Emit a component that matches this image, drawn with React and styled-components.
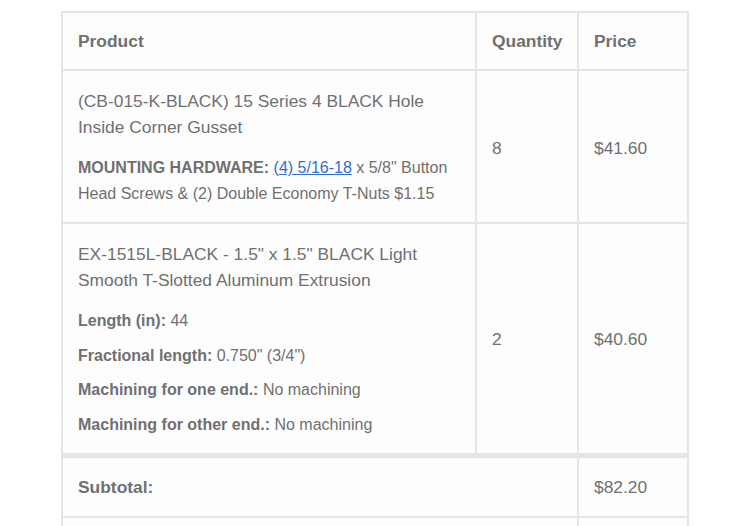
import React from "react";
import styled, { createGlobalStyle } from "styled-components";

const Global = createGlobalStyle`
  html, body { margin: 0; padding: 0; background: #ffffff; }
  body { font-family: "Liberation Sans", Arial, Helvetica, sans-serif; }
`;

const Page = styled.div`
  padding: 11px 0 0 61px;
  height: 526px;
  box-sizing: border-box;
  overflow: hidden;
`;

const Table = styled.table`
  width: 628px;
  table-layout: fixed;
  border-collapse: separate;
  border-spacing: 0;
  border: 1px solid #e5e5e5;
  background: #fdfdfd;
  color: #707070;
  font-size: 17.4px;
`;

const Col = styled.col`
  width: ${(p) => p.$w}px;
`;

const HeadCell = styled.th`
  border: 1px solid #e5e5e5;
  padding: 15px 15px;
  line-height: 26px;
  text-align: left;
  font-weight: bold;
  vertical-align: middle;
`;

const Cell = styled.td`
  border: 1px solid #e5e5e5;
  padding: 17px 15px 15px;
  line-height: 26px;
  text-align: left;
  vertical-align: middle;
  word-wrap: break-word;
`;

const FootCell = styled(Cell)`
  padding: 16px 15px;
  border-top-width: ${(p) => (p.$first ? "4px" : "1px")};
  font-weight: ${(p) => (p.$label ? "bold" : "normal")};
`;

const Title = styled.div`
  line-height: 26px;
`;

const MetaList = styled.ul`
  list-style: none;
  margin: 15px 0 0;
  padding: 0;
  font-size: 16px;
`;

const MetaItem = styled.li`
  line-height: 26px;
  margin: 0;
  & + & {
    margin-top: 8.5px;
  }
`;

const Label = styled.strong`
  font-weight: bold;
`;

const Link = styled.a`
  color: #2f6fd1;
  text-decoration: underline;
`;

const items = [
  {
    title: "(CB-015-K-BLACK) 15 Series 4 BLACK Hole Inside Corner Gusset",
    meta: [
      {
        label: "MOUNTING HARDWARE:",
        value: (
          <>
            <Link href="#">(4) 5/16-18</Link> x 5/8" Button Head Screws &amp; (2)
            Double Economy T-Nuts $1.15
          </>
        ),
      },
    ],
    qty: "8",
    price: "$41.60",
  },
  {
    title: 'EX-1515L-BLACK - 1.5" x 1.5" BLACK Light Smooth T-Slotted Aluminum Extrusion',
    meta: [
      { label: "Length (in):", value: "44" },
      { label: "Fractional length:", value: '0.750" (3/4")' },
      { label: "Machining for one end.:", value: "No machining" },
      { label: "Machining for other end.:", value: "No machining" },
    ],
    qty: "2",
    price: "$40.60",
  },
];

export default function App() {
  return (
    <Page>
      <Global />
      <Table>
        <colgroup>
          <Col $w={414} />
          <Col $w={102} />
          <Col $w={110} />
        </colgroup>
        <thead>
          <tr>
            <HeadCell>Product</HeadCell>
            <HeadCell>Quantity</HeadCell>
            <HeadCell>Price</HeadCell>
          </tr>
        </thead>
        <tbody>
          {items.map((it) => (
            <tr key={it.title}>
              <Cell>
                <Title>{it.title}</Title>
                <MetaList>
                  {it.meta.map((m) => (
                    <MetaItem key={m.label}>
                      <Label>{m.label}</Label> {m.value}
                    </MetaItem>
                  ))}
                </MetaList>
              </Cell>
              <Cell>{it.qty}</Cell>
              <Cell>{it.price}</Cell>
            </tr>
          ))}
        </tbody>
        <tfoot>
          <tr>
            <FootCell $first $label colSpan={2}>
              Subtotal:
            </FootCell>
            <FootCell $first>$82.20</FootCell>
          </tr>
          <tr>
            <FootCell $label colSpan={2}>
              &nbsp;
            </FootCell>
            <FootCell>&nbsp;</FootCell>
          </tr>
        </tfoot>
      </Table>
    </Page>
  );
}
